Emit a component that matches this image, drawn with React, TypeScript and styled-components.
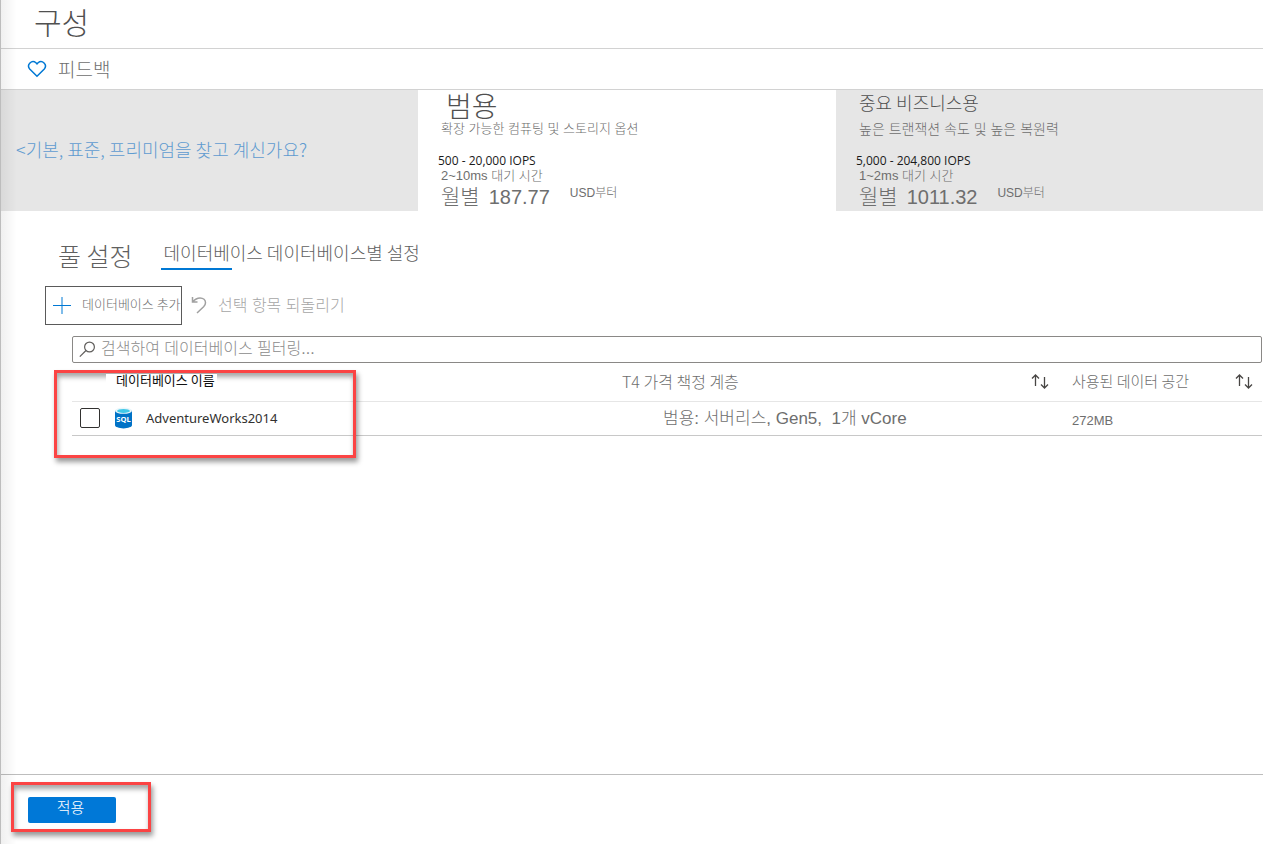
import React from "react";
import styled, { createGlobalStyle } from "styled-components";

const ui = `"Liberation Sans", "Noto Sans CJK KR", sans-serif`;
const kr = `"Noto Sans CJK KR", sans-serif`;
const segoe = `"Open Sans", "Noto Sans CJK KR", sans-serif`;

const Global = createGlobalStyle`
  *, *::before, *::after { box-sizing: border-box; }
  body { margin: 0; background: #fff; font-family: ${kr}; font-weight: 300; }
  button, input { font: inherit; }
`;

const Page = styled.div`
  position: relative;
  display: flex;
  flex-direction: column;
  min-height: 100vh;
  border-left: 1px solid #bdbdbd;
  color: #6e6e6e;
  &::before {
    content: "";
    position: absolute;
    inset: 0 auto 0 0;
    width: 16px;
    background: linear-gradient(to right, rgba(0, 0, 0, 0.06), rgba(0, 0, 0, 0));
    pointer-events: none;
  }
`;

const Header = styled.header`
  display: flex;
  align-items: center;
  height: 49px;
  padding: 0 33px 6px;
  border-bottom: 1px solid #d2d2d2;
`;

const Title = styled.h1`
  margin: 0;
  font-size: 30px;
  line-height: 40px;
  font-weight: 300;
  color: #505050;
`;

const CommandBar = styled.div`
  display: flex;
  height: 41px;
  padding: 0 26px;
  border-bottom: 1px solid #d2d2d2;
`;

const GhostButton = styled.button`
  display: flex;
  align-items: center;
  padding: 0;
  border: 0;
  background: none;
  color: inherit;
  white-space: nowrap;
`;

const Label = styled.span`
  padding-bottom: 2px;
`;

const FeedbackButton = styled(GhostButton)`
  gap: 11px;
  font-size: 19px;
`;

const Tiers = styled.section`
  display: grid;
  grid-template-columns: 417fr 418fr 427fr;
  height: 121px;
`;

const LegacyTier = styled.div`
  display: flex;
  align-items: center;
  padding: 0 0 4px 15px;
  background: #e6e6e6;
`;

const LegacyLink = styled.a`
  font-size: 18px;
  color: #5f9bd0;
  text-decoration: none;
  white-space: nowrap;
`;

const TierCard = styled.article<{ $muted?: boolean }>`
  display: flex;
  flex-direction: column;
  padding-left: 23px;
  background: ${(p) => (p.$muted ? "#e6e6e6" : "#fff")};
  font-family: ${ui};
  white-space: nowrap;
`;

const TierName = styled.h2<{ $large?: boolean }>`
  margin: 0;
  padding-left: ${(p) => (p.$large ? 5 : 0)}px;
  height: 30px;
  font-family: ${(p) => (p.$large ? ui : kr)};
  font-size: ${(p) => (p.$large ? 28 : 18)}px;
  line-height: ${(p) => (p.$large ? 36 : 24)}px;
  font-weight: 300;
  color: #505050;
`;

const TierText = styled.p<{ $size: number }>`
  margin: 0;
  font-size: ${(p) => p.$size}px;
  line-height: 18px;
`;

const Iops = styled.p`
  margin: 16px 0 0 -3px;
  font-family: ${segoe};
  font-weight: 400;
  font-size: 12px;
  line-height: 14px;
  color: #1a1a1a;
`;

const Latency = styled.p`
  margin: 0;
  font-size: 13px;
  line-height: 15px;
`;

const Price = styled.div`
  display: flex;
  height: 26px;
  font-size: 21px;
  line-height: 28px;
  strong {
    margin-left: 9px;
    font-size: 20px;
    font-weight: 400;
  }
  small {
    margin-left: 20px;
    font-size: 12px;
    line-height: 20px;
  }
`;

const Content = styled.main`
  flex: 1;
  padding: 28px 0 0 44px;
`;

const Tabs = styled.nav`
  display: flex;
  gap: 30px;
  height: 32px;
  padding-left: 13px;
`;

const Tab = styled.a<{ $active?: boolean }>`
  position: relative;
  padding-left: ${(p) => (p.$active ? 1 : 0)}px;
  font-size: ${(p) => (p.$active ? 18 : 25)}px;
  line-height: ${(p) => (p.$active ? 26 : 32)}px;
  color: #606060;
  text-decoration: none;
  white-space: nowrap;
  &::after {
    content: "";
    display: ${(p) => (p.$active ? "block" : "none")};
    position: absolute;
    left: -2px;
    bottom: 1px;
    width: 71px;
    height: 2px;
    background: #0078d4;
  }
`;

const Toolbar = styled.div`
  display: flex;
  gap: 9px;
  height: 39px;
  margin-top: 15px;
`;

const AddButton = styled(GhostButton)`
  gap: 9px;
  width: 137px;
  padding: 0 0 2px 7px;
  border: 1px solid #5a5a5a;
  font-size: 13px;
  overflow: hidden;
`;

const RevertButton = styled(GhostButton)`
  gap: 10px;
  padding-bottom: 1px;
  font-family: ${ui};
  font-size: 16px;
  color: #a6a6a6;
`;

const Grid = styled.div`
  position: relative;
  margin: 11px 1px 0 27px;
`;

const Search = styled.label`
  display: flex;
  align-items: center;
  gap: 5px;
  height: 27px;
  padding: 0 6px;
  border: 1px solid #8a8886;
  border-radius: 2px;
  input {
    flex: 1;
    height: 24px;
    padding: 0 0 2px;
    border: 0;
    outline: 0;
    background: none;
    font-family: ${ui};
    font-size: 16px;
  }
  input::placeholder {
    color: #8c8c8c;
    opacity: 1;
  }
`;

const Table = styled.table`
  width: 100%;
  table-layout: fixed;
  border-collapse: collapse;
  th, td {
    padding: 0;
    text-align: left;
    font-weight: 300;
    white-space: nowrap;
  }
  thead tr { height: 38px; border-bottom: 1px solid #e6e6e6; }
  tbody tr { height: 34px; border-bottom: 1px solid #c8c8c8; }
`;

const CheckCol = styled.col`width: 43px;`;
const TierCol = styled.col`width: 450px;`;
const SpaceCol = styled.col`width: 190px;`;

const NameHeading = styled.span`
  position: relative;
  z-index: 2;
  display: block;
  width: max-content;
  margin: 0 0 4px -9px;
  padding: 0 2px 0 10px;
  background: #fff;
  font-size: 13px;
  line-height: 12px;
  font-weight: 400;
  color: #111;
`;

const SortHeading = styled.div<{ $size: number; $inset: number }>`
  display: flex;
  align-items: center;
  justify-content: space-between;
  padding-right: ${(p) => p.$inset}px;
  font-size: ${(p) => p.$size}px;
  line-height: 22px;
`;

const SortButton = styled(GhostButton)`
  height: 20px;
`;

const Checkbox = styled.input`
  appearance: none;
  display: block;
  width: 20px;
  height: 20px;
  margin: 0 0 0 8px;
  border: 1px solid #323130;
  border-radius: 2px;
  background: #fff;
`;

const NameCell = styled.label`
  display: flex;
  align-items: center;
  gap: 14px;
  font-family: "Noto Sans", sans-serif;
  font-weight: 400;
  font-size: 13px;
  line-height: 20px;
  color: #323130;
`;

const TierValue = styled.span`
  padding-left: 41px;
  font-family: ${ui};
  font-size: 17px;
  line-height: 24px;
`;

const SpaceValue = styled.span`
  font-family: ${ui};
  font-size: 13px;
`;

const Callout = styled.div`
  position: absolute;
  z-index: 1;
  border: 3px solid #fb4444;
  box-shadow: 2px 4px 5px rgba(0, 0, 0, 0.4), inset 1px 4px 5px rgba(0, 0, 0, 0.35);
  pointer-events: none;
`;

const RowCallout = styled(Callout)`
  top: 34px;
  left: -18px;
  width: 302px;
  height: 88px;
`;

const ApplyCallout = styled(Callout)`
  inset: -15px -35px -9px -17px;
`;

const Footer = styled.footer`
  height: 70px;
  padding: 22px 27px 0;
  border-top: 1px solid #bdbdbd;
`;

const ApplyWrap = styled.div`
  position: relative;
  width: 88px;
`;

const ApplyButton = styled.button`
  display: block;
  width: 100%;
  height: 26px;
  padding: 0 3px 6px 0;
  border: 0;
  border-radius: 2px;
  background: #0078d7;
  color: #fff;
  font-size: 15px;
  line-height: 20px;
`;

const HeartIcon = () => (
  <svg width="20" height="18" viewBox="0 0 20 18" fill="none" stroke="#0078d4" strokeWidth="1.5">
    <path d="M10 16.3 2.7 9A4.4 4.4 0 0 1 8.9 2.8L10 3.9l1.1-1.1A4.4 4.4 0 0 1 17.3 9z" />
  </svg>
);

const PlusIcon = () => (
  <svg width="20" height="18" viewBox="0 0 20 18" fill="none">
    <path d="M9 1v17" stroke="#7fbcea" strokeWidth="2" />
    <path d="M0 9.5h18" stroke="#0078d4" />
  </svg>
);

const UndoIcon = () => (
  <svg width="17" height="18" viewBox="0 0 17 18" fill="none" stroke="#a0a0a0" strokeWidth="1.5">
    <path d="M1.5 1v5h5M1.8 5.8C4 3.2 6.300 2 9 2c3.300 0 5.500 2.200 5.500 4.800 0 1.700-.7 2.800-1.900 4L6 17" />
  </svg>
);

const SearchIcon = () => (
  <svg width="17" height="17" viewBox="0 0 17 17" fill="none" stroke="#605e5c" strokeWidth="1.2">
    <circle cx="10.500" cy="6" r="4.900" />
    <path d="M7 9.500.8 15.700" />
  </svg>
);

const SortIcon = () => (
  <svg width="18" height="15" viewBox="0 0 18 15" fill="none" stroke="#484644" strokeWidth="1.300">
    <path d="M4.500 12V1M1 4.500 4.500 1 8 4.500M13.500 3v11M10 10.500l3.500 3.500 3.500-3.500" />
  </svg>
);

const SqlIcon = () => (
  <svg width="17" height="22" viewBox="0 0 18 22">
    <path d="M0 3v15.800C0 20.500 4 22 9 22s9-1.500 9-3.200V3z" fill="#0072c6" />
    <ellipse cx="9" cy="3.300" rx="9" ry="3.300" fill="#e8f6fb" />
    <ellipse cx="9" cy="3.500" rx="6.800" ry="2.100" fill="#40c8e8" />
    <text x="9" y="15" textAnchor="middle" fontFamily="Open Sans, sans-serif" fontWeight="700" fontSize="8" fill="#fff">SQL</text>
  </svg>
);

export default function App() {
  return (
    <>
      <Global />
      <Page>
        <Header>
          <Title>구성</Title>
        </Header>
        <CommandBar>
          <FeedbackButton type="button"><HeartIcon /><Label>피드백</Label></FeedbackButton>
        </CommandBar>
        <Tiers>
          <LegacyTier>
            <LegacyLink href="#legacy">&lt;기본, 표준, 프리미엄을 찾고 계신가요?</LegacyLink>
          </LegacyTier>
          <TierCard>
            <TierName $large>범용</TierName>
            <TierText $size={13}>확장 가능한 컴퓨팅 및 스토리지 옵션</TierText>
            <Iops>500 - 20,000 IOPS</Iops>
            <Latency>2~10ms 대기 시간</Latency>
            <Price>월별 <strong>187.77</strong><small>USD부터</small></Price>
          </TierCard>
          <TierCard $muted>
            <TierName>중요 비즈니스용</TierName>
            <TierText $size={14}>높은 트랜잭션 속도 및 높은 복원력</TierText>
            <Iops>5,000 - 204,800 IOPS</Iops>
            <Latency>1~2ms 대기 시간</Latency>
            <Price>월별 <strong>1011.32</strong><small>USD부터</small></Price>
          </TierCard>
        </Tiers>
        <Content>
          <Tabs>
            <Tab href="#pool">풀 설정</Tab>
            <Tab href="#databases" $active>데이터베이스 데이터베이스별 설정</Tab>
          </Tabs>
          <Toolbar>
            <AddButton type="button"><PlusIcon /><Label>데이터베이스 추가</Label></AddButton>
            <RevertButton type="button"><UndoIcon /><Label>선택 항목 되돌리기</Label></RevertButton>
          </Toolbar>
          <Grid>
            <Search>
              <SearchIcon />
              <input type="text" placeholder="검색하여 데이터베이스 필터링..." />
            </Search>
            <Table>
              <colgroup><CheckCol /><col /><TierCol /><SpaceCol /></colgroup>
              <thead>
                <tr>
                  <td />
                  <th scope="col"><NameHeading>데이터베이스 이름</NameHeading></th>
                  <th scope="col">
                    <SortHeading $size={16} $inset={23}><Label>T4 가격 책정 계층</Label><SortButton type="button" aria-label="정렬"><SortIcon /></SortButton></SortHeading>
                  </th>
                  <th scope="col">
                    <SortHeading $size={15} $inset={9}><Label>사용된 데이터 공간</Label><SortButton type="button" aria-label="정렬"><SortIcon /></SortButton></SortHeading>
                  </th>
                </tr>
              </thead>
              <tbody>
                <tr>
                  <td><Checkbox type="checkbox" id="db-1" /></td>
                  <td><NameCell htmlFor="db-1"><SqlIcon />AdventureWorks2014</NameCell></td>
                  <td><TierValue>범용: 서버리스, Gen5,&nbsp; 1개 vCore</TierValue></td>
                  <td><SpaceValue>272MB</SpaceValue></td>
                </tr>
              </tbody>
            </Table>
            <RowCallout />
          </Grid>
        </Content>
        <Footer>
          <ApplyWrap>
            <ApplyButton type="button">적용</ApplyButton>
            <ApplyCallout />
          </ApplyWrap>
        </Footer>
      </Page>
    </>
  );
}
